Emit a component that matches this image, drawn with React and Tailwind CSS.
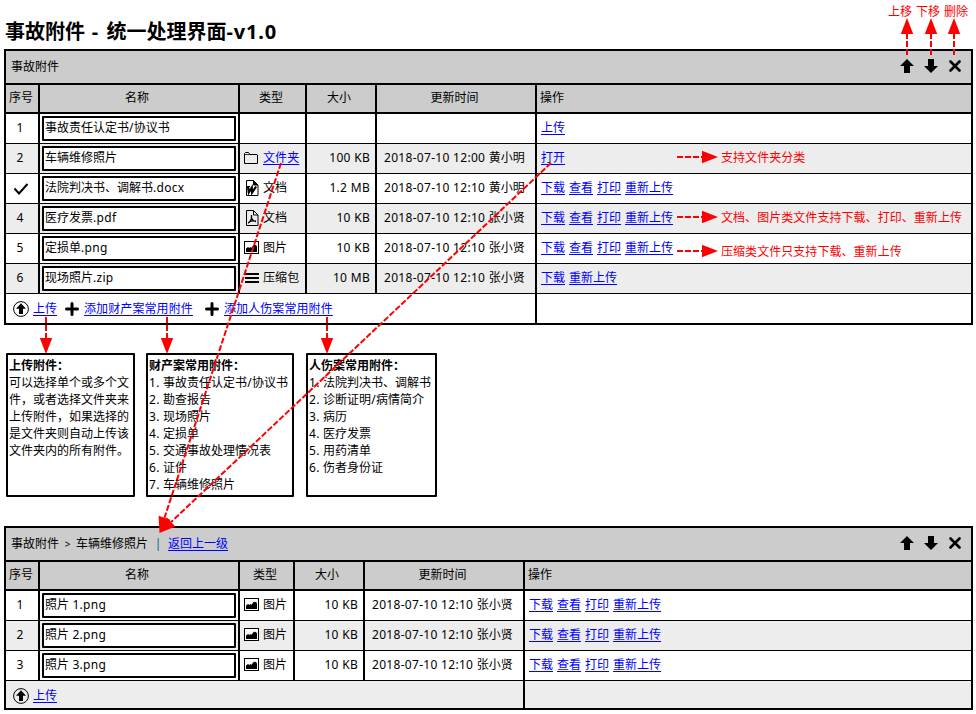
import React from "react";

const COLS_MAIN = "grid-cols-[32px_2px_198px_2px_65px_2px_68px_2px_158px_2px_434px]";
const COLS_SUB = "grid-cols-[32px_2px_198px_2px_53px_2px_68px_2px_158px_2px_446px]";

// Latin runs are tracked slightly wider than the Chinese glyphs around them.
function T({ children }) {
  return String(children)
    .split(/([\x20-\x7e]+)/)
    .filter(Boolean)
    .map((part, i) =>
      /^[\x20-\x7e]+$/.test(part) ? (
        <span key={i} className="whitespace-pre tracking-[0.3px]">{part}</span>
      ) : (
        <span key={i}>{part}</span>
      )
    );
}

function Link({ children }) {
  return (
    <a className="cursor-pointer whitespace-nowrap text-[#0000ff] underline decoration-1 underline-offset-2">
      <T>{children}</T>
    </a>
  );
}

const Bar = () => <div className="bg-black" />;

function FolderIcon() {
  return (
    <svg width="15" height="14" viewBox="0 0 15 14" fill="none" stroke="#000">
      <path d="M.5 12.5v-10l1-1h3l1.500 2h7l.5.5v8.500z" />
      <path d="M1 3.500h5" strokeWidth=".8" />
    </svg>
  );
}

function WordIcon() {
  return (
    <svg width="15" height="16" viewBox="0 0 15 16" fill="none" stroke="#000">
      <path d="M2.500 .5h7l4.500 4.500v10.500H2.500z" fill="#fff" />
      <path d="M9.500 .5v4.500h4.500z" fill="#000" />
      <path d="M4 6.500l.8 6 3-5 .3 5 4-6" strokeWidth="2.200" />
      <path d="M3 6.500h3" />
    </svg>
  );
}

function PdfIcon() {
  return (
    <svg width="15" height="16" viewBox="0 0 15 16" fill="none" stroke="#000">
      <path d="M2.500 .5h7l4.500 4.500v10.500H2.500z" />
      <path d="M9.500 .5v4.500h4.500" />
      <path d="M7.500 5v3.500c-.6 2-2 4-3.500 4.800M7.700 8.500c.8 1.600 2 2.700 4.300 3.200M5 12c2-1.200 4-1.500 7-.8" strokeWidth="1.300" />
    </svg>
  );
}

function ImageIcon() {
  return (
    <svg width="15" height="14" viewBox="0 0 15 14">
      <rect x=".5" y=".5" width="14" height="12" fill="#fff" stroke="#000" />
      <path d="M2 11V7.500l2-1.500 1.500 1 1-1 1 .8L10 3.500l1 .8 1-.6 1 2V11z" />
    </svg>
  );
}

function ZipIcon() {
  return (
    <svg width="15" height="14" viewBox="0 0 15 14">
      <path d="M1 2h14v2H1zM1 6h14v2H1zM1 10h14v2H1z" />
    </svg>
  );
}

function UploadIcon() {
  return (
    <svg width="16" height="16" viewBox="0 0 16 16">
      <circle cx="8" cy="8" r="7.400" fill="none" stroke="#000" strokeWidth="1" />
      <path d="M8 2.300l5 5.500h-3v5.200H6V7.800H3z" />
    </svg>
  );
}

function PlusIcon() {
  return (
    <svg width="14" height="14" viewBox="0 0 14 14" stroke="#000" strokeWidth="3" strokeLinecap="round">
      <path d="M7 1.500v11M1.500 7h11" />
    </svg>
  );
}

const ICONS = { folder: FolderIcon, word: WordIcon, pdf: PdfIcon, image: ImageIcon, zip: ZipIcon };

function WindowButtons() {
  return (
    <div className="flex items-center gap-[10px] pb-[2px] pr-[10px]">
      <svg width="14" height="14" viewBox="0 0 14 14"><path d="M7 0l7 7h-4v7H4V7H0z" /></svg>
      <svg width="14" height="14" viewBox="0 0 14 14"><path d="M4 0h6v7h4l-7 7-7-7h4z" /></svg>
      <svg className="ml-px" width="12" height="12" viewBox="0 0 12 12" stroke="#000" strokeWidth="2.600" strokeLinecap="round">
        <path d="M1.500 1.500l9 9M10.500 1.500l-9 9" />
      </svg>
    </div>
  );
}

function HeaderRow({ cols }) {
  return (
    <div className={`grid h-[27px] bg-[#cccccc] text-center leading-[26px] ${cols}`}>
      <div className="-ml-[2px]">序号</div>
      <Bar />
      <div className="pr-1">名称</div>
      <Bar />
      <div className="pr-[3px]">类型</div>
      <Bar />
      <div className="pr-1">大小</div>
      <Bar />
      <div className="pr-[3px]">更新时间</div>
      <Bar />
      <div className="pl-[3px] text-left">操作</div>
    </div>
  );
}

function FileRow({ cols, index, name, icon, type, typeLink, size, time, actions, shaded }) {
  const Icon = icon && ICONS[icon];
  return (
    <div className={`grid h-[30px] border-b border-black leading-[28px] ${cols} ${shaded ? "bg-[#ededed]" : "bg-white"}`}>
      <div className="flex justify-center pr-1">
        {index === "check" ? (
          <svg className="ml-px mt-2" width="16" height="14" viewBox="0 0 16 14" fill="none" stroke="#000" strokeWidth="2">
            <path d="M1.500 6.500l4.500 5L14.500 2" />
          </svg>
        ) : (
          <T>{index}</T>
        )}
      </div>
      <Bar />
      <div className="p-0.5">
        <div className="h-[25px] rounded-[1px] border-2 border-black bg-white pl-[1px] leading-[20px]"><T>{name}</T></div>
      </div>
      <Bar />
      <div className="flex items-center gap-1 whitespace-nowrap pb-px pl-1">
        {Icon && <Icon />}
        <span className="tracking-[0.1px]">{typeLink ? <Link>{type}</Link> : type}</span>
      </div>
      <Bar />
      <div className="pr-[5px] text-right"><T>{size}</T></div>
      <Bar />
      <div className="whitespace-nowrap pl-[7px]"><T>{time}</T></div>
      <Bar />
      <div className="flex gap-1 pl-1">
        {actions.map((a) => <Link key={a}>{a}</Link>)}
      </div>
    </div>
  );
}

const ALL = ["下载", "查看", "打印", "重新上传"];

const FILES = [
  { index: "1", name: "事故责任认定书/协议书", size: "", time: "", actions: ["上传"] },
  { index: "2", name: "车辆维修照片", icon: "folder", type: "文件夹", typeLink: true, size: "100 KB", time: "2018-07-10 12:00 黄小明", actions: ["打开"] },
  { index: "check", name: "法院判决书、调解书.docx", icon: "word", type: "文档", size: "1.2 MB", time: "2018-07-10 12:10 黄小明", actions: ALL },
  { index: "4", name: "医疗发票.pdf", icon: "pdf", type: "文档", size: "10 KB", time: "2018-07-10 12:10 张小贤", actions: ALL },
  { index: "5", name: "定损单.png", icon: "image", type: "图片", size: "10 KB", time: "2018-07-10 12:10 张小贤", actions: ALL },
  { index: "6", name: "现场照片.zip", icon: "zip", type: "压缩包", size: "10 MB", time: "2018-07-10 12:10 张小贤", actions: ["下载", "重新上传"] },
];

const PHOTOS = ["1", "2", "3"].map((n) => ({
  index: n, name: `照片 ${n}.png`, icon: "image", type: "图片", size: "10 KB", time: "2018-07-10 12:10 张小贤", actions: ALL,
}));

function NoteBox({ width, title, children }) {
  return (
    <div className={`h-[144px] rounded-[1px] border-2 border-black bg-white pl-[1px] pt-[2px] leading-[17px] ${width}`}>
      <div className="font-bold">{title}</div>
      {children}
    </div>
  );
}

function NumberedList({ items }) {
  return items.map((item, i) => (
    <div key={item} className="whitespace-nowrap"><T>{`${i + 1}. ${item}`}</T></div>
  ));
}

// Dashed red connector ending in a filled triangular head.
function Arrow({ from, to }) {
  const dx = to[0] - from[0];
  const dy = to[1] - from[1];
  const len = Math.hypot(dx, dy);
  const ux = dx / len;
  const uy = dy / len;
  const bx = to[0] - ux * 16;
  const by = to[1] - uy * 16;
  return (
    <g>
      <line x1={from[0]} y1={from[1]} x2={bx} y2={by} stroke="#f00" strokeWidth="2" strokeDasharray="6 2" />
      <polygon fill="#f00" points={`${to[0]},${to[1]} ${bx - uy * 6.2},${by + ux * 6.2} ${bx + uy * 6.2},${by - ux * 6.2}`} />
    </g>
  );
}

const ARROWS = [
  [[907, 55], [907, 18]],
  [[931, 55], [931, 18]],
  [[954, 55], [954, 18]],
  [[677, 157], [718, 157]],
  [[677, 217], [718, 217]],
  [[677, 251], [718, 251]],
  [[46, 317], [46, 354]],
  [[167, 317], [167, 354]],
  [[327, 317], [327, 354]],
  [[281, 163], [159.5, 533]],
  [[551, 163], [159.5, 533]],
];

function Note({ className, children }) {
  return <div className={`absolute whitespace-nowrap leading-[16px] text-[#ff0000] ${className}`}>{children}</div>;
}

export default function App() {
  return (
    <div className="relative h-[714px] w-[976px] overflow-hidden bg-white font-['Noto_Sans','Noto_Sans_CJK_SC',sans-serif] text-[12px] text-black">
      <h1 className="h-[49px] whitespace-pre pl-[5px] pt-[18px] text-[20px] font-bold leading-[28px]">
        事故附件<span className="tracking-[1.6px]"> - </span>统一处理界面<span className="tracking-[0.8px]">-v1.0</span>
      </h1>

      <section className="ml-1 w-[969px] border-2 border-black">
        <div className="flex h-8 items-center justify-between bg-[#cccccc] pl-[5px]">
          <span>事故附件</span>
          <WindowButtons />
        </div>
        <div className="border-y-2 border-black"><HeaderRow cols={COLS_MAIN} /></div>
        {FILES.map((f, i) => <FileRow key={f.index} cols={COLS_MAIN} shaded={i % 2 === 1} {...f} />)}
        <div className="grid h-[29px] grid-cols-[529px_2px_434px]">
          <div className="flex items-center pl-[7px]">
            <UploadIcon />
            <span className="ml-1"><Link>上传</Link></span>
            <span className="ml-2"><PlusIcon /></span>
            <span className="ml-[5px] tracking-[0.1px]"><Link>添加财产案常用附件</Link></span>
            <span className="ml-[12px]"><PlusIcon /></span>
            <span className="ml-[5px] tracking-[0.1px]"><Link>添加人伤案常用附件</Link></span>
          </div>
          <Bar />
        </div>
      </section>

      <div className="ml-[6px] mt-7 flex">
        <NoteBox width="w-[129px]" title="上传附件：">
          <div className="w-[121px]">可以选择单个或多个文件，或者选择文件夹来上传附件，如果选择的是文件夹则自动上传该文件夹内的所有附件。</div>
        </NoteBox>
        <div className="w-[11px]" />
        <NoteBox width="w-[148px]" title="财产案常用附件：">
          <NumberedList items={["事故责任认定书/协议书", "勘查报告", "现场照片", "定损单", "交通事故处理情况表", "证件", "车辆维修照片"]} />
        </NoteBox>
        <div className="w-3" />
        <NoteBox width="w-[131px]" title="人伤案常用附件：">
          <NumberedList items={["法院判决书、调解书", "诊断证明/病情简介", "病历", "医疗发票", "用药清单", "伤者身份证"]} />
        </NoteBox>
      </div>

      <section className="ml-1 mt-[29px] w-[969px] border-2 border-black">
        <div className="flex h-8 items-center justify-between bg-[#cccccc] pl-[5px]">
          <div className="flex items-center whitespace-pre">
            <span>事故附件</span>
            <span className="w-[17px] text-center text-[10px]">&gt;</span>
            <span>车辆维修照片</span>
            <span className="w-5 text-center text-[#0b5f8f]">|</span>
            <Link>返回上一级</Link>
          </div>
          <WindowButtons />
        </div>
        <div className="border-y-2 border-black"><HeaderRow cols={COLS_SUB} /></div>
        {PHOTOS.map((f, i) => <FileRow key={f.index} cols={COLS_SUB} shaded={i % 2 === 1} {...f} />)}
        <div className="grid h-[27px] grid-cols-[517px_2px_446px] bg-[#ededed]">
          <div className="flex items-center pl-[7px] pt-0.5">
            <UploadIcon />
            <span className="ml-1"><Link>上传</Link></span>
          </div>
          <Bar />
        </div>
      </section>

      <svg className="pointer-events-none absolute left-0 top-0" width="976" height="714">
        {ARROWS.map(([from, to], i) => <Arrow key={i} from={from} to={to} />)}
      </svg>
      <Note className="left-[888px] top-[4px]">上移</Note>
      <Note className="left-[916px] top-[4px]">下移</Note>
      <Note className="left-[944px] top-[4px]">删除</Note>
      <Note className="left-[721px] top-[150px] tracking-[0.05px]">支持文件夹分类</Note>
      <Note className="left-[721px] top-[210px] tracking-[0.05px]">文档、图片类文件支持下载、打印、重新上传</Note>
      <Note className="left-[721px] top-[244px] tracking-[0.05px]">压缩类文件只支持下载、重新上传</Note>
    </div>
  );
}
